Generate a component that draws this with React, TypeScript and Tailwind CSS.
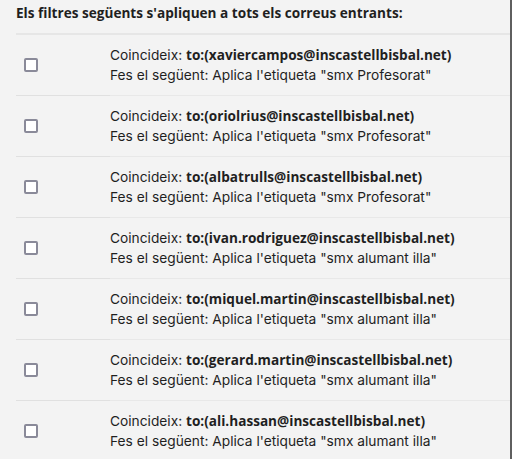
const filters = [
  { to: "xaviercampos@inscastellbisbal.net", label: "smx Profesorat" },
  { to: "oriolrius@inscastellbisbal.net", label: "smx Profesorat" },
  { to: "albatrulls@inscastellbisbal.net", label: "smx Profesorat" },
  { to: "ivan.rodriguez@inscastellbisbal.net", label: "smx alumant illa" },
  { to: "miquel.martin@inscastellbisbal.net", label: "smx alumant illa" },
  { to: "gerard.martin@inscastellbisbal.net", label: "smx alumant illa" },
  { to: "ali.hassan@inscastellbisbal.net", label: "smx alumant illa" },
];

export default function App() {
  return (
    <div className="h-[459px] w-full overflow-hidden bg-[#f3f3f3] border-r-2 border-[#5f5f5f] text-[#1f1f1f] font-['Inter','Noto_Sans',sans-serif]">
      <div className="h-[33px] pl-4 pt-[3px] font-['Open_Sans',sans-serif] text-[13.6px] font-bold leading-5">
        Els filtres següents s'apliquen a tots els correus entrants:
      </div>
      <div className="ml-4 border-t-2 border-[#e6e6e6]">
        {filters.map((f) => (
          <div key={f.to} className="flex h-[61px]">
            <div className="flex w-[94px] shrink-0 items-center border-b border-[#e0e0e0] pl-2">
              <input
                type="checkbox"
                className="h-[14px] w-[14px] appearance-none rounded-[2px] border-2 border-[#8a8a99] bg-white"
              />
            </div>
            <div className="flex flex-1 flex-col justify-center border-b border-[#e8e8e8] text-[13.75px] leading-5">
              <div>
                Coincideix:{" "}
                <span className="font-['Open_Sans',sans-serif] text-[13.6px] font-bold">to:({f.to})</span>
              </div>
              <div>Fes el següent: Aplica l'etiqueta "{f.label}"</div>
            </div>
          </div>
        ))}
      </div>
    </div>
  );
}
